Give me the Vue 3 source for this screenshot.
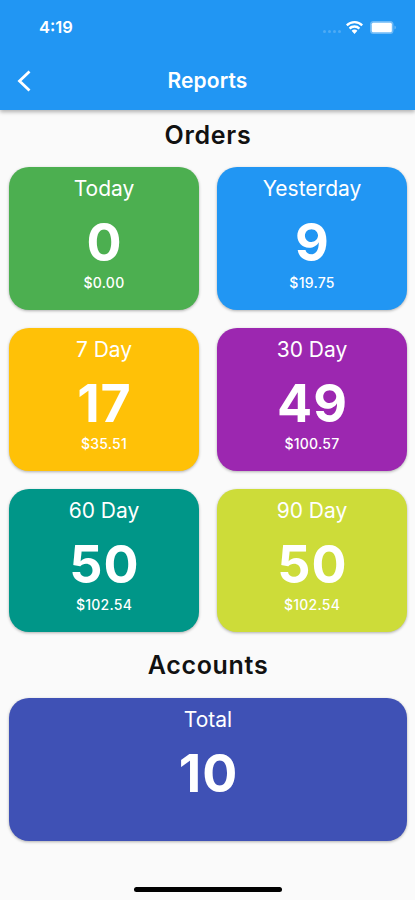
<script setup>
import { ref } from 'vue'

const orders = ref([
  { title: 'Today', count: 0, amount: '$0.00', color: 'green' },
  { title: 'Yesterday', count: 9, amount: '$19.75', color: 'blue' },
  { title: '7 Day', count: 17, amount: '$35.51', color: 'amber' },
  { title: '30 Day', count: 49, amount: '$100.57', color: 'purple' },
  { title: '60 Day', count: 50, amount: '$102.54', color: 'teal' },
  { title: '90 Day', count: 50, amount: '$102.54', color: 'lime' }
])

const accounts = ref(10)
</script>

<template>
  <div class="screen">
    <header>
      <div class="status">
        <span class="time">4:19</span>
        <div class="signals">
          <span class="dots"><i></i><i></i><i></i><i></i></span>
          <svg class="wifi" width="17" height="13" viewBox="0 0 17 12" preserveAspectRatio="none">
            <path d="M8.5 0C5.2 0 2.2 1.2 0 3.3l1.6 1.6a10 10 0 0 1 13.8 0L17 3.3A12.2 12.2 0 0 0 8.5 0z" />
            <path d="M8.5 4C6.3 4 4.3 4.8 2.8 6.2l1.6 1.6a6 6 0 0 1 8.2 0l1.6-1.6A8.3 8.3 0 0 0 8.5 4z" />
            <path d="M8.5 7.9c-1.1 0-2.1.4-2.9 1.1l2.9 3 2.9-3a4.3 4.3 0 0 0-2.900-1.1z" />
          </svg>
          <svg class="battery" width="27" height="13" viewBox="0 0 27 13">
            <rect class="shell" width="23.5" height="13" rx="3.5" />
            <rect x="1.8" y="1.8" width="20" height="9.4" rx="1.5" />
            <path class="cap" d="M24.5 4.5c1.8.6 1.8 3.4 0 4z" />
          </svg>
        </div>
      </div>
      <div class="bar">
        <svg class="back" width="14" height="22" viewBox="0 0 14 22">
          <path d="M12.5 1.500 2.500 11l10 9.500" />
        </svg>
        <h1>Reports</h1>
      </div>
    </header>

    <main>
      <h2>Orders</h2>
      <div class="grid">
        <div v-for="order in orders" :key="order.title" class="card" :class="order.color">
          <span class="title">{{ order.title }}</span>
          <span class="count">{{ order.count }}</span>
          <span class="amount">{{ order.amount }}</span>
        </div>
      </div>

      <h2 class="accounts">Accounts</h2>
      <div class="card indigo">
        <span class="title">Total</span>
        <span class="count">{{ accounts }}</span>
      </div>
    </main>

    <div class="home"></div>
  </div>
</template>

<style>
body {
  background: #fafafa;
}
</style>

<style scoped>
.screen {
  display: flex;
  flex-direction: column;
  box-sizing: border-box;
  width: 415px;
  height: 900px;
  overflow: hidden;
  background: #fafafa;
  font-family: Inter, "Liberation Sans", sans-serif;
}

header {
  flex: none;
  height: 110px;
  background: #2196f3;
  color: #fff;
  box-shadow: 0 2px 4px rgba(0, 0, 0, 0.3);
}

.status {
  display: flex;
  justify-content: space-between;
  align-items: center;
  height: 54px;
  padding: 0 18px 0 39px;
}

.time {
  font-size: 16.5px;
  font-weight: 600;
}

.signals {
  display: flex;
  align-items: center;
  fill: #fff;
}

.dots {
  display: flex;
  gap: 2px;
  margin: 8px 5px 0 0;
}

.dots i {
  width: 3px;
  height: 3px;
  border-radius: 50%;
  background: rgba(255, 255, 255, 0.2);
}

.battery {
  margin-left: 7px;
}

.shell,
.cap {
  fill-opacity: 0.35;
}

.bar {
  display: grid;
  grid-template-columns: 60px 1fr 60px;
  align-items: center;
  height: 53px;
}

.back {
  margin-left: 17px;
  fill: none;
  stroke: #fff;
  stroke-width: 2.8;
}

h1 {
  margin: 0;
  text-align: center;
  font-size: 21px;
  font-weight: 600;
  letter-spacing: 0.1px;
}

main {
  flex: 1;
  padding: 0 8px 0 9px;
}

h2 {
  margin: 0;
  height: 57px;
  line-height: 50px;
  text-align: center;
  font-size: 25px;
  font-weight: 600;
  letter-spacing: 0.7px;
  color: #111;
}

.accounts {
  height: 66px;
  line-height: 67px;
}

.grid {
  display: grid;
  grid-template-columns: 1fr 1fr;
  gap: 18px;
}

.card {
  display: flex;
  flex-direction: column;
  align-items: center;
  height: 143px;
  border-radius: 20px;
  color: #fff;
  box-shadow: 0 1px 3px rgba(0, 0, 0, 0.3);
}

.title {
  height: 43px;
  line-height: 43px;
  font-size: 21px;
  letter-spacing: 0;
}

.count {
  height: 65px;
  line-height: 66px;
  padding-left: 1px;
  font-size: 52px;
  font-weight: 700;
  letter-spacing: 1px;
}

.amount {
  line-height: 15px;
  font-size: 14px;
  font-weight: 500;
  letter-spacing: 0.25px;
}

.green {
  background: #4caf50;
}

.blue {
  background: #2196f3;
}

.amber {
  background: #ffc107;
}

.purple {
  background: #9c27b0;
}

.teal {
  background: #009688;
}

.lime {
  background: #cddc39;
}

.indigo {
  background: #3f51b5;
}

.home {
  flex: none;
  width: 148px;
  height: 5px;
  margin: 0 auto 8px;
  border-radius: 3px;
  background: #000;
}
</style>
